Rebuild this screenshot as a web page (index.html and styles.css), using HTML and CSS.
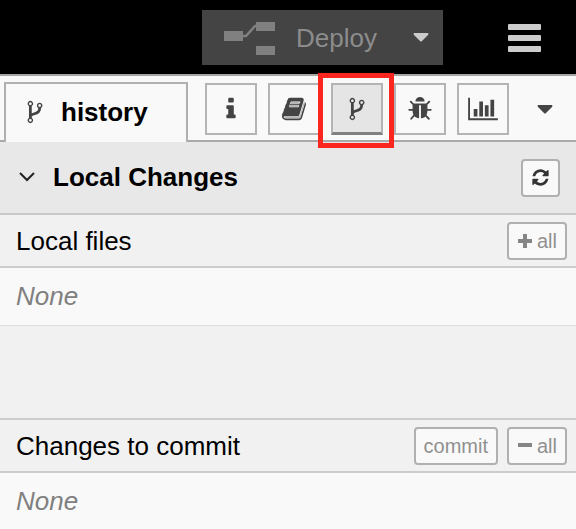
FILE: index.html
```html
<!DOCTYPE html>
<html lang="en">
<head>
<meta charset="utf-8">
<title>History</title>
<link rel="stylesheet" href="styles.css">
</head>
<body>
<svg class="defs" aria-hidden="true">
  <symbol id="fork" viewBox="0 0 1792 1792"><path d="M672 1472q0-40-28-68t-68-28-68 28-28 68 28 68 68 28 68-28 28-68zm0-1152q0-40-28-68t-68-28-68 28-28 68 28 68 68 28 68-28 28-68zm640 128q0-40-28-68t-68-28-68 28-28 68 28 68 68 28 68-28 28-68zm96 0q0 52-26 96.5t-70 69.5q-2 287-226 414-67 38-203 81-128 40-169.5 71t-41.5 100v26q44 25 70 69.5t26 96.5q0 80-56 136t-136 56-136-56-56-136q0-52 26-96.5t70-69.5v-820q-44-25-70-69.5t-26-96.5q0-80 56-136t136-56 136 56 56 136q0 52-26 96.5t-70 69.5v497q54-26 154-57 55-17 87.5-29.5t70.5-31 59-39.5 40.5-51 28-69.5 8.5-91.5q-44-25-70-69.5t-26-96.5q0-80 56-136t136-56 136 56 56 136z"/></symbol>
</svg>
<header class="topbar">
  <div class="deploy">
    <button class="deploy-main" type="button">
      <svg class="deploy-icon" viewBox="0 0 52 36" aria-hidden="true">
        <path d="M19 16h3l9-10h3" fill="none" stroke="#808080" stroke-width="2.5"/>
        <path d="M0 11h19v10H0zM32 2h19v9H32zM32 26h19v9H32z" fill="#808080"/>
      </svg>
      Deploy
    </button>
    <button class="deploy-more" type="button" aria-label="Deploy options">
      <svg class="caret" viewBox="0 0 16 9" aria-hidden="true"><path d="M1 0h14q1 1 0 2L9 8q-1 1-2 0L1 2q-1-1 0-2z"/></svg>
    </button>
  </div>
  <button class="menu" type="button" aria-label="Menu"><span></span><span></span><span></span></button>
</header>
<nav class="tabs">
  <button class="tab" type="button">
    <svg class="icon" aria-hidden="true"><use href="#fork"/></svg>
    history
  </button>
  <div class="tools">
    <button class="tool" type="button" aria-label="Information">
      <svg class="icon" viewBox="0 0 1792 1792"><path d="M1216 1344v128q0 26-19 45t-45 19h-512q-26 0-45-19t-19-45v-128q0-26 19-45t45-19h64v-384h-64q-26 0-45-19t-19-45v-128q0-26 19-45t45-19h384q26 0 45 19t19 45v576h64q26 0 45 19t19 45zm-128-1152v192q0 26-19 45t-45 19h-256q-26 0-45-19t-19-45v-192q0-26 19-45t45-19h256q26 0 45 19t19 45z"/></svg>
    </button>
    <button class="tool" type="button" aria-label="Help">
      <svg class="icon" viewBox="0 0 1792 1792"><path d="M1703 478q40 57 18 129l-275 906q-19 64-76.5 107.5t-122.5 43.5h-923q-77 0-148.5-53.5t-99.5-131.5q-24-67-2-127 0-4 3-27t4-37q1-8-3-21.5t-3-19.5q2-11 8-21t16.5-23.5 16.5-23.5q23-38 45-91.5t30-91.5q3-10 .5-30t-.5-28q3-11 17-28t17-23q21-36 42-92t25-90q1-9-2.5-32t.5-28q4-13 22-30.5t22-22.5q19-26 42.5-84.5t27.5-96.5q1-8-3-25.5t-2-26.5q2-8 9-18t18-23 17-21q8-12 16.5-30.5t15-35 16-36 19.5-32 26.5-23.5 36-11.5 47.5 5.5l-1 3q38-9 51-9h761q74 0 114 56t18 130l-274 906q-36 119-71.5 153.5t-128.5 34.5h-869q-27 0-38 15-11 16-1 43 24 70 144 70h923q29 0 56-15.5t35-41.5l300-987q7-22 5-57 38 15 59 43zm-1064 2q-4 13 2 22.5t20 9.5h608q13 0 25.5-9.5t16.5-22.5l21-64q4-13-2-22.5t-20-9.5h-608q-13 0-25.5 9.5t-16.5 22.5zm-83 256q-4 13 2 22.5t20 9.5h608q13 0 25.5-9.5t16.5-22.5l21-64q4-13-2-22.5t-20-9.5h-608q-13 0-25.5 9.5t-16.5 22.5z"/><path class="pages" d="M220 1370h1010l60-30 300-980 60 90-300 1000-110 100H290z"/><path class="pages" d="M640 410h640l-90 340H540z"/><path d="M600 560h640l-16 60H584z"/></svg>
    </button>
    <div class="marked">
      <button class="tool active" type="button" aria-label="History">
        <svg class="icon"><use href="#fork"/></svg>
      </button>
    </div>
    <button class="tool" type="button" aria-label="Debug">
      <svg class="icon" viewBox="0 0 1792 1792"><path d="M1696 960q0 26-19 45t-45 19h-224q0 171-67 290l208 209q19 19 19 45t-19 45q-18 19-45 19t-45-19l-198-197q-5 5-15 13t-42 28.5-65 36.5-82 29-97 13v-896h-128v896q-51 0-101.5-13.5t-87-33-66-39-43.5-32.5l-15-14-183 207q-20 21-48 21-24 0-43-16-19-18-20.5-44.5t15.5-46.5l202-227q-58-114-58-274h-224q-26 0-45-19t-19-45 19-45 45-19h224v-294l-173-173q-19-19-19-45t19-45 45-19 45 19l173 173h844l173-173q19-19 45-19t45 19 19 45-19 45l-173 173v294h224q26 0 45 19t19 45zm-480-576h-640q0-133 93.5-226.5t226.5-93.5 226.5 93.5 93.5 226.5z"/></svg>
    </button>
    <button class="tool" type="button" aria-label="Dashboard">
      <svg class="icon wide" viewBox="0 0 2048 1792"><path d="M640 896v512h-256v-512h256zm384-512v1024h-256v-1024h256zm1024 1152v128h-2048v-1536h128v1408h1920zm-640-896v768h-256v-768h256zm384-384v1152h-256v-1152h256z"/></svg>
    </button>
  </div>
  <button class="more" type="button" aria-label="More tabs">
    <svg class="caret" viewBox="0 0 16 9" aria-hidden="true"><path d="M1 0h14q1 1 0 2L9 8q-1 1-2 0L1 2q-1-1 0-2z"/></svg>
  </button>
</nav>
<main>
  <div class="section-head">
    <h1 class="title">
      <svg class="chevron" viewBox="0 0 16 10" aria-hidden="true"><path d="M1 1l7 7 7-7"/></svg>
      Local Changes
    </h1>
    <button class="small square" type="button" aria-label="Refresh">
      <svg class="refresh" viewBox="0 0 1792 1792"><path d="M1639 1056q0 5-1 7-64 268-268 434.5t-478 166.5q-146 0-282.5-55t-243.5-157l-129 129q-19 19-45 19t-45-19-19-45v-448q0-26 19-45t45-19h448q26 0 45 19t19 45-19 45l-137 137q71 66 161 102t187 36q134 0 250-65t186-179q11-17 53-117 8-23 30-23h192q13 0 22.5 9.5t9.5 22.5zm25-800v448q0 26-19 45t-45 19h-448q-26 0-45-19t-19-45 19-45l138-138q-148-137-349-137-134 0-250 65t-186 179q-11 17-53 117-8 23-30 23h-199q-13 0-22.5-9.5t-9.5-22.5v-7q65-268 270-434.5t480-166.5q146 0 284 55.5t245 156.5l130-129q19-19 45-19t45 19 19 45z"/></svg>
    </button>
  </div>
  <section class="files">
    <div class="row">
      <h2 class="label">Local files</h2>
      <button class="small" type="button">
        <svg class="sign" viewBox="0 0 16 16" aria-hidden="true"><path d="M6 1h4v5h5v4h-5v5H6v-5H1V6h5z"/></svg>
        all
      </button>
    </div>
    <p class="none">None</p>
    <div class="space"></div>
  </section>
  <section class="files">
    <div class="row">
      <h2 class="label">Changes to commit</h2>
      <button class="small" type="button">commit</button>
      <button class="small" type="button">
        <svg class="sign" viewBox="0 0 16 16" aria-hidden="true"><path d="M1 5h14v4H1z"/></svg>
        all
      </button>
    </div>
    <p class="none">None</p>
  </section>
</main>
</body>
</html>
```
FILE: styles.css
```css
* {
  box-sizing: border-box;
}

body {
  margin: 0;
  background: #f9f9f9;
  color: #000;
  font: 26px/30px "Liberation Sans", Arial, sans-serif;
  overflow: hidden;
}

button {
  display: flex;
  align-items: center;
  justify-content: center;
  flex: none;
  margin: 0;
  padding: 0;
  border: 0;
  background: none;
  color: inherit;
  font: inherit;
}

h1,
h2,
p {
  margin: 0;
}

.defs {
  display: none;
}

.topbar {
  display: flex;
  justify-content: flex-end;
  padding: 10px 35px 9px 0;
  background: #000;
  border-bottom: 2px solid #a6a6a6;
}

.deploy {
  display: flex;
  height: 55px;
  background: #444;
}

.deploy-main {
  gap: 20px;
  padding-left: 22px;
  color: #8c8c8c;
}

.deploy-icon {
  width: 52px;
  height: 36px;
}

.deploy-more {
  padding: 0 14px 0 36px;
  color: #ccc;
}

.caret {
  width: 16px;
  height: 9px;
  fill: currentColor;
}

.menu {
  flex-direction: column;
  gap: 5px;
  margin-left: 65px;
}

.menu span {
  width: 33px;
  height: 6px;
  border-radius: 1px;
  background: #ccc;
}

.tabs {
  display: flex;
  height: 66px;
  padding: 6px 0 0 4px;
  box-shadow: inset 0 -2px #aaa;
}

.tab {
  gap: 13px;
  padding: 0 38px 2px 16px;
  border: 2px solid #b0b0b0;
  border-bottom: 0;
  background: #f9f9f9;
  font-weight: bold;
}

.icon {
  width: 26px;
  height: 26px;
  fill: #444;
}

.icon.wide {
  width: 30px;
}

.pages {
  fill: #b8b8b8;
}

.tools {
  display: flex;
  align-items: flex-start;
  gap: 11px;
  margin: 1px 0 0 auto;
}

.tool {
  width: 52px;
  height: 52px;
  border: 2px solid #b4b4b4;
}

.tool.active {
  border-bottom: 3px solid #808080;
  background: #e5e5e5;
}

.marked {
  position: relative;
}

.marked::after {
  content: "";
  position: absolute;
  inset: -10px -11px -13px -13px;
  z-index: 1;
  border: 5px solid #fb2620;
}

.more {
  width: 67px;
  padding: 0 0 5px 5px;
  color: #444;
}

.section-head {
  display: flex;
  align-items: center;
  justify-content: space-between;
  height: 73px;
  padding: 0 16px 0 19px;
  border-bottom: 2px solid #c8c8c8;
  background: #e8e8e8;
}

.title {
  display: flex;
  align-items: center;
  gap: 18px;
  padding-bottom: 2px;
  font-size: 26px;
}

.chevron {
  width: 16px;
  height: 10px;
  fill: none;
  stroke: #222;
  stroke-width: 2;
}

.small {
  gap: 4px;
  height: 38px;
  padding: 0 8px;
  border: 2px solid #b0b0b0;
  border-radius: 4px;
  background: #f9f9f9;
  color: #909090;
  font-size: 20px;
}

.square {
  width: 39px;
  padding: 0;
}

.refresh {
  width: 19px;
  height: 19px;
  fill: #333;
}

.sign {
  width: 16px;
  height: 16px;
  fill: #858585;
}

.files {
  background: #f1f1f1;
}

.row {
  display: flex;
  align-items: center;
  gap: 9px;
  height: 53px;
  padding: 0 9px 0 16px;
  border-bottom: 2px solid #ccc;
}

.files + .files .row {
  height: 55px;
  border-top: 2px solid #ccc;
}

.label {
  flex: 1;
  font-size: 26px;
  font-weight: normal;
}

.none {
  padding: 13px 16px 14px;
  border-bottom: 1px solid #ddd;
  background: #f9f9f9;
  color: #808080;
  font-style: italic;
}

.space {
  height: 92px;
}
```
